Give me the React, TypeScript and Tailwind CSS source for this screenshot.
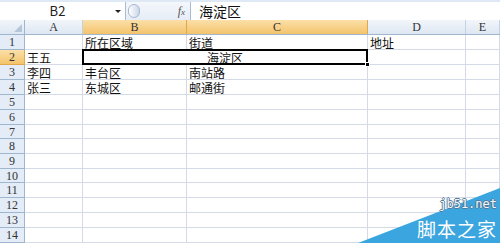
const cols = [
  { key: "A", w: "w-[58px]" },
  { key: "B", w: "w-[104px]" },
  { key: "C", w: "w-[181px]" },
  { key: "D", w: "w-[98px]" },
  { key: "E", w: "flex-1" },
];

const rows = [
  { n: 1, h: "h-[15px]", cells: ["", "所在区域", "街道", "地址", ""] },
  { n: 2, h: "h-[15px]", cells: ["王五", "", "", "", ""] },
  { n: 3, h: "h-[15px]", cells: ["李四", "丰台区", "南站路", "", ""] },
  { n: 4, h: "h-[15px]", cells: ["张三", "东城区", "邮通街", "", ""] },
  { n: 5, h: "h-[15px]", cells: [] },
  { n: 6, h: "h-[15px]", cells: [] },
  { n: 7, h: "h-[14px]", cells: [] },
  { n: 8, h: "h-[15px]", cells: [] },
  { n: 9, h: "h-[15px]", cells: [] },
  { n: 10, h: "h-[14px]", cells: [] },
  { n: 11, h: "h-[15px]", cells: [] },
  { n: 12, h: "h-[15px]", cells: [] },
  { n: 13, h: "h-[15px]", cells: [] },
  { n: 14, h: "h-[15px]", cells: [] },
];

const cjk = "font-['SimSun','Noto_Sans_CJK_SC',sans-serif]";
const hdrFont = "font-['Liberation_Serif','DejaVu_Serif',serif]";

function Cell({ w, text }: { w: string; text?: string }) {
  return (
    <div
      className={`${w} shrink-0 flex items-end overflow-hidden whitespace-nowrap border-r border-b border-[#d5dbe6] pl-[2px] text-[12px] leading-[13px] text-[#111] ${cjk}`}
    >
      {text}
    </div>
  );
}

export default function App() {
  return (
    <div className="relative w-[500px] h-[243px] overflow-hidden bg-white">
      {/* Formula bar */}
      <div className="h-[20px] flex bg-[#dfe8f5] pt-[2px]">
        <div className="w-[126px] flex items-center bg-white border-r border-[#a9bbd3]">
          <span className={`flex-1 text-center text-[13px] text-[#222] ${cjk}`}>B2</span>
          <div className="mr-[4px] w-0 h-0 border-l-[3px] border-r-[3px] border-t-[3px] border-l-transparent border-r-transparent border-t-[#222]" />
        </div>
        <div className="w-[64px] flex items-center bg-gradient-to-b from-[#f4f7fb] to-[#e6edf7]">
          <div className="ml-[2px] h-[14px] w-[12px] rounded-full border border-[#a7b8cf] bg-gradient-to-r from-[#ffffff] to-[#cbd7e8]" />
          <span className="ml-auto mr-[5px] font-['Liberation_Serif',serif] italic text-[12px] text-[#555]">
            f<span className="text-[9px]">x</span>
          </span>
        </div>
        <div className={`flex-1 flex items-center bg-white border-l border-[#a9bbd3] pl-[8px] text-[14px] text-[#111] ${cjk}`}>
          海淀区
        </div>
      </div>

      {/* Column headers */}
      <div className="h-[15px] flex border-b border-[#9eb6ce] bg-gradient-to-b from-[#f2f6fb] to-[#dde6f2]">
        <div className="relative w-[25px] border-r border-[#9eb6ce]">
          <div className="absolute right-[2px] bottom-[2px] w-0 h-0 border-l-[8px] border-l-transparent border-b-[8px] border-b-[#b5c6da]" />
        </div>
        {cols.map((c) => {
          const sel = c.key === "B" || c.key === "C";
          return (
            <div
              key={c.key}
              className={`${c.w} shrink-0 flex items-center justify-center border-r text-[12px] ${hdrFont} ${
                sel
                  ? "bg-gradient-to-b from-[#fbe0a8] to-[#f4c36b] border-[#e2a84c] text-[#333]"
                  : "border-[#c2d1e3] text-[#333]"
              }`}
            >
              {c.key}
            </div>
          );
        })}
      </div>

      {/* Rows */}
      {rows.map((r) => (
        <div key={r.n} className={`${r.h} flex`}>
          <div
            className={`w-[25px] shrink-0 flex items-center justify-center border-r border-b text-[12px] ${hdrFont} ${
              r.n === 2
                ? "bg-gradient-to-b from-[#fbe0a8] to-[#f4c36b] border-[#e2a84c] text-[#333]"
                : "bg-[#e4ecf7] border-[#9eb6ce] text-[#333]"
            }`}
          >
            {r.n}
          </div>
          <Cell w={cols[0].w} text={r.cells[0]} />
          {r.n === 2 ? (
            <div className="relative w-[285px] shrink-0 flex items-end justify-center border-r border-b border-[#d5dbe6]">
              <span className={`text-[12px] leading-[13px] text-[#111] ${cjk}`}>海淀区</span>
              <div className="absolute -left-[1px] -top-[1px] -right-[1px] -bottom-[1px] border-2 border-black" />
              <div className="absolute -right-[3px] -bottom-[3px] w-[5px] h-[5px] bg-black border border-white" />
            </div>
          ) : (
            <>
              <Cell w={cols[1].w} text={r.cells[1]} />
              <Cell w={cols[2].w} text={r.cells[2]} />
            </>
          )}
          <Cell w={cols[3].w} text={r.cells[3]} />
          <Cell w={cols[4].w} text={r.cells[4]} />
        </div>
      ))}

      {/* Watermark */}
      <div className="absolute right-0 bottom-0 w-[142px] h-[55px]">
        <svg width="142" height="55" className="absolute inset-0">
          <polygon points="0,55 142,0 142,55" fill="#3ba5df" />
        </svg>
        <div className="absolute right-[3px] top-[10px] font-['DejaVu_Sans_Mono',monospace] text-[12px] leading-[12px] text-[#f2f8fc] [text-shadow:1px_0_0_#557a99,-1px_0_0_#557a99,0_1px_0_#557a99,0_-1px_0_#557a99]">
          jb51.net
        </div>
        <div className={`absolute right-[3px] bottom-[3px] text-[19px] leading-[22px] text-white tracking-[1px] ${cjk}`}>
          脚本之家
        </div>
      </div>
    </div>
  );
}
